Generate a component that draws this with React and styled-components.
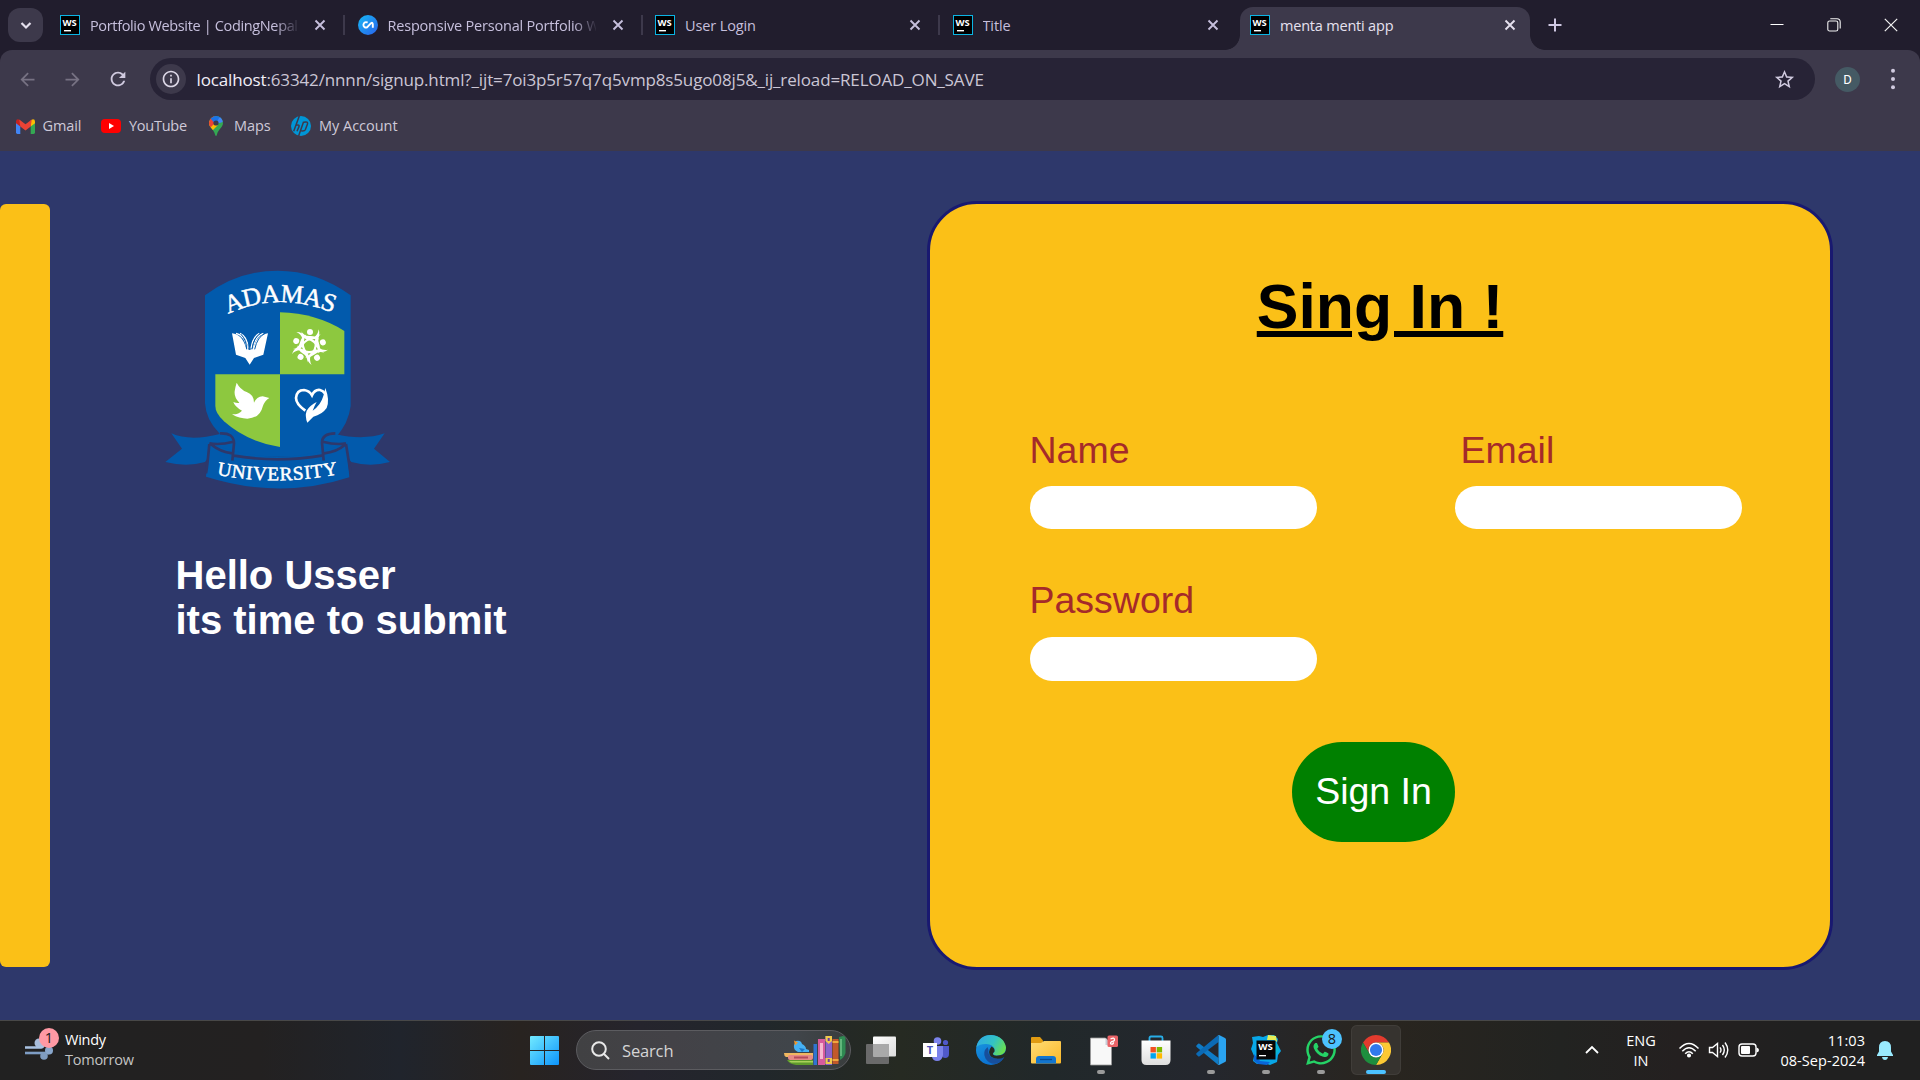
import React from 'react';
import styled, { createGlobalStyle } from 'styled-components';
import { MdArrowBack, MdArrowForward, MdRefresh, MdStarBorder, MdInfoOutline } from 'react-icons/md';
import { FaWhatsapp } from 'react-icons/fa';

const ui = `"Open Sans", "Noto Sans", sans-serif`;
const arial = `"Liberation Sans", Arial, sans-serif`;

const GlobalStyle = createGlobalStyle`
  *, *::before, *::after { box-sizing: border-box; }
  html, body { margin: 0; padding: 0; }
  body { width: 1920px; height: 1080px; overflow: hidden; background: #2e386b; font-family: ${ui}; }
  svg { display: block; flex: none; }
`;

const Screen = styled.div`
  width: 1920px;
  height: 1080px;
  display: flex;
  flex-direction: column;
  overflow: hidden;
`;

/* ---------- Browser chrome ---------- */

const TabStrip = styled.header`
  display: flex;
  height: 50px;
  flex: none;
  background: #211d2d;
`;

const TabSearch = styled.button`
  width: 35px;
  height: 34px;
  margin: 8px 7px 0 8px;
  padding: 0;
  border: 0;
  border-radius: 12px;
  background: #3d394b;
  display: grid;
  place-items: center;
`;

const Tab = styled.div`
  position: relative;
  display: flex;
  align-items: center;
  width: ${(p) => (p.$active ? 290 : 297.5)}px;
  height: ${(p) => (p.$active ? 43 : 50)}px;
  margin-top: ${(p) => (p.$active ? 7 : 0)}px;
  padding: ${(p) => (p.$active ? '0 0 7px 10px' : '0 0 0 10px')};
  border-radius: 13px 13px 0 0;
  background: ${(p) => (p.$active ? '#3d394b' : 'transparent')};
  color: ${(p) => (p.$active ? '#e6e1ef' : '#c6bfdc')};
  &::before,
  &::after {
    content: '';
    display: ${(p) => (p.$active ? 'block' : 'none')};
    position: absolute;
    bottom: 0;
    width: 15px;
    height: 15px;
  }
  &::before {
    left: -15px;
    background: radial-gradient(circle at 0 0, transparent 14.5px, #3d394b 15.2px);
  }
  &::after {
    right: -15px;
    background: radial-gradient(circle at 100% 0, transparent 14.5px, #3d394b 15.2px);
  }
`;

const TabTitle = styled.span`
  width: 208px;
  margin: 1px 14px 0 10px;
  overflow: hidden;
  white-space: nowrap;
  font-size: 14.5px;
  line-height: 22px;
  letter-spacing: ${(p) => p.$spacing || -0.12}px;
  mask-image: ${(p) => (p.$fade ? 'linear-gradient(90deg, #000 185px, transparent 210px)' : 'none')};
`;

const TabDivider = styled.i`
  width: 2px;
  height: 20px;
  margin-left: 15px;
  background: #3d394b;
  visibility: ${(p) => (p.$hidden ? 'hidden' : 'visible')};
`;

const NewTab = styled.div`
  width: 50px;
  height: 50px;
  display: grid;
  place-items: center;
`;

const WindowControls = styled.div`
  display: flex;
  margin: 0 1px 0 auto;
  & > div {
    width: 57px;
    height: 49px;
    display: grid;
    place-items: center;
  }
`;

const ToolbarArea = styled.div`
  height: 101px;
  flex: none;
  background: linear-gradient(#211d2d, #211d2d) 0 0 / 100% 14px no-repeat;
`;

const ToolbarInner = styled.div`
  height: 101px;
  background: #3d394b;
  border-radius: 12px 12px 0 0;
`;

const Toolbar = styled.div`
  display: flex;
  align-items: center;
  height: 58px;
`;

const NavButton = styled.div`
  width: 45px;
  height: 45px;
  display: grid;
  place-items: center;
  color: ${(p) => (p.$muted ? '#777283' : '#d0cadf')};
`;

const NavGroup = styled.div`
  display: flex;
  padding-left: 5px;
  width: 150px;
`;

const Omnibox = styled.div`
  display: flex;
  align-items: center;
  width: 1665px;
  height: 42px;
  padding: 0 19px 0 6px;
  border-radius: 21px;
  background: #272336;
`;

const SiteInfo = styled.div`
  width: 30px;
  height: 30px;
  margin-right: 10.5px;
  border-radius: 50%;
  background: #3d394b;
  color: #dcd7e6;
  display: grid;
  place-items: center;
`;

const Url = styled.div`
  flex: 1;
  margin-top: 1px;
  font-size: 17px;
  line-height: 26px;
  letter-spacing: -0.14px;
  white-space: nowrap;
  color: #cbc6d5;
  b {
    font-weight: 400;
    color: #f2eff8;
  }
`;

const Avatar = styled.div`
  width: 25px;
  height: 25px;
  margin: 0 31px 0 20px;
  border-radius: 50%;
  background: #455a64;
  color: #fff;
  font: 13px/25px Roboto, sans-serif;
  text-align: center;
`;

const Bookmarks = styled.nav`
  display: flex;
  height: 36px;
  align-items: center;
  padding-left: 15.5px;
`;

const Bookmark = styled.div`
  display: flex;
  align-items: center;
  width: ${(p) => p.$w}px;
  font-size: 14.5px;
  line-height: 20px;
  letter-spacing: ${(p) => p.$ls || -0.1}px;
  color: #cec9d8;
  white-space: nowrap;
  svg { margin-right: ${(p) => p.$gap || 8}px; }
`;

/* ---------- Page ---------- */

const Page = styled.main`
  display: flex;
  align-items: flex-start;
  height: 869px;
  flex: none;
  background: #2e386b;
  font-family: ${arial};
`;

const Strip = styled.div`
  width: 50px;
  height: 763px;
  margin-top: 53px;
  border-radius: 6px;
  background: #fbc017;
`;

const Intro = styled.section`
  width: 877px;
  padding: 109px 0 0 100px;
`;

const Greeting = styled.h2`
  margin: 53px 0 0 25.5px;
  font-size: 40px;
  line-height: 45px;
  font-weight: 700;
  color: #fff;
`;

const Card = styled.form`
  width: 906px;
  height: 769px;
  margin-top: 50px;
  padding-top: 66px;
  border: 3px solid #191970;
  border-radius: 50px;
  background: #fbc017;
`;

const CardTitle = styled.h1`
  margin: 0 0 86px;
  font-size: 62.5px;
  line-height: 72px;
  font-weight: 700;
  text-align: center;
  text-decoration: underline;
  text-decoration-thickness: 6px;
  color: #000;
`;

const Fields = styled.div`
  display: grid;
  grid-template-columns: 287px 287px;
  column-gap: 138px;
  row-gap: 49px;
  margin-left: 100px;
`;

const Field = styled.label`
  display: flex;
  flex-direction: column;
  gap: ${(p) => p.$gap || 14}px;
  color: brown;
  font-size: 37.5px;
  line-height: 44px;
`;

const FieldName = styled.span`
  padding-left: ${(p) => p.$indent || 0}px;
  margin-left: -0.5px;
`;

const Input = styled.input`
  width: 287px;
  height: ${(p) => p.$h || 43}px;
  padding: 0 20px;
  border: 0;
  border-radius: 25px;
  background: #fff;
  font-size: 16px;
`;

const Submit = styled.button`
  display: block;
  width: 163px;
  height: 100px;
  margin: 61px 0 0 362px;
  padding: 0 0 2px;
  border: 0;
  border-radius: 50px;
  background: green;
  color: #fff;
  font: 37.5px ${arial};
  white-space: nowrap;
`;

/* ---------- Taskbar ---------- */

const Taskbar = styled.footer`
  display: flex;
  height: 60px;
  flex: none;
  border-top: 1px solid #484848;
  background: linear-gradient(90deg, #212121 0, #232121 260px, #20242c 400px, #282320 520px, #25242d 640px,
    #21272b 760px, #262a22 900px, #21282a 1050px, #24272e 1200px, #29251f 1380px, #222321 1560px, #242020 1680px, #202020 1800px);
  color: #fff;
`;

const Widgets = styled.div`
  display: flex;
  width: 518px;
  padding: 7px 0 0 24px;
`;

const TwoLines = styled.div`
  width: ${(p) => p.$w}px;
  margin-top: 1.5px;
  text-align: ${(p) => p.$align || 'left'};
  font-size: 14.5px;
  line-height: 20px;
  letter-spacing: ${(p) => p.$ls || 0}px;
  white-space: nowrap;
  span { display: block; }
  span:last-child { color: ${(p) => p.$second || '#fff'}; }
`;

const WeatherIcon = styled.div`
  position: relative;
  width: 41px;
  height: 44px;
`;

const Badge = styled.span`
  position: absolute;
  left: ${(p) => p.$x}px;
  top: ${(p) => p.$y}px;
  width: 20px;
  height: 20px;
  border-radius: 50%;
  background: ${(p) => p.$bg};
  color: #1a1a1a;
  font: 14.5px/20px ${ui};
  text-align: center;
`;

const StartButton = styled.div`
  width: 58px;
  padding: 15px 0 0 12px;
`;

const SearchBox = styled.div`
  display: flex;
  align-items: center;
  width: 275px;
  height: 40px;
  margin-top: 9px;
  padding: 0 4px 0 14px;
  border: 1px solid #5c5c60;
  border-radius: 20px;
  background: linear-gradient(90deg, #414143, #434247 35%, #40454a 80%, #393d3d);
  color: #d5d5d5;
  font-size: 16.5px;
  span { flex: 1; margin-left: 12px; letter-spacing: -0.15px; }
`;

const Apps = styled.div`
  display: flex;
  padding: 4px 0 0 5px;
  gap: 5px;
`;

const TaskbarApp = styled.div`
  position: relative;
  width: 50px;
  height: 50px;
  display: grid;
  place-items: center;
  border-radius: 6px;
  background: ${(p) => (p.$active ? '#36332f' : 'transparent')};
  box-shadow: ${(p) => (p.$active ? 'inset 0 0 0 1px #403d39' : 'none')};
  &::after {
    content: '';
    display: ${(p) => (p.$running ? 'block' : 'none')};
    position: absolute;
    bottom: 1px;
    left: ${(p) => (p.$active ? 15 : 21)}px;
    width: ${(p) => (p.$active ? 20 : 8)}px;
    height: 4px;
    border-radius: 2px;
    background: ${(p) => (p.$active ? '#4cc2ff' : '#9a9a9a')};
  }
`;

const Tray = styled.div`
  display: flex;
  align-items: flex-start;
  gap: 12px;
  margin-left: auto;
  padding: 8px 27px 0 0;
  & > svg { margin-top: 8px; }
`;

const TrayGroup = styled.div`
  display: flex;
  gap: 8px;
  width: 91px;
  padding-top: 11px;
  margin-left: -5px;
  margin-right: -12px;
`;

/* ---------- Icons ---------- */

const WsIcon = () => (
  <svg width="20" height="20" viewBox="0 0 20 20">
    <rect x=".5" y=".5" width="19" height="19" fill="#000" stroke="#0bb4e3" />
    <text x="2.4" y="10.6" fontFamily="Open Sans, sans-serif" fontWeight="700" fontSize="9.4" fill="#fff">WS</text>
    <rect x="4" y="15" width="7" height="1.4" fill="#fff" />
  </svg>
);

const CnIcon = () => (
  <svg width="20" height="20" viewBox="0 0 20 20">
    <defs>
      <linearGradient id="cn" x1="0" y1="0" x2="1" y2="1">
        <stop offset="0" stopColor="#16b9f5" />
        <stop offset="1" stopColor="#2a62ec" />
      </linearGradient>
    </defs>
    <circle cx="10" cy="10" r="10" fill="url(#cn)" />
    <path d="M9.600 7.600A2.700 2.700 0 1 0 9 12.400L13 8.200Q14.800 7 14.800 9.600V12.800" fill="none" stroke="#fff" strokeWidth="1.900" />
  </svg>
);

const CloseX = () => (
  <svg width="16" height="16" viewBox="0 0 16 16" stroke="currentColor" strokeWidth="1.9">
    <path d="M3.5 3.5l9 9M12.5 3.5l-9 9" />
  </svg>
);

const GmailIcon = () => (
  <svg width="19" height="15" viewBox="0 0 19 15">
    <path d="M0 2.5V13.6Q0 15 1.4 15H4.3V6z" fill="#4285f4" />
    <path d="M19 2.5V13.6Q19 15 17.6 15H14.7V6z" fill="#34a853" />
    <path d="M14.7 1.2L17 .2Q19 .2 19 2.4V4.2L14.7 7.5z" fill="#fbbc04" />
    <path d="M0 4.2V2.4Q0 .2 2 .2L4.3 1.2V7.5z" fill="#c5221f" />
    <path d="M3.2.4L9.5 5.2 15.8.4 14.7 7.5 9.5 11.4 4.3 7.5z" fill="#ea4335" />
  </svg>
);

const YoutubeIcon = () => (
  <svg width="20" height="14" viewBox="0 0 20 14">
    <rect width="20" height="14" rx="4" fill="#f00" />
    <path d="M8 4l5 3-5 3z" fill="#fff" />
  </svg>
);

const MapsIcon = () => (
  <svg width="14" height="20" viewBox="0 0 14 20">
    <defs>
      <clipPath id="pin"><path d="M7 0a7 7 0 0 1 7 7c0 4.500-5 6.500-6 11.500Q7.500 20 7 20T6 18.500C5 13.500 0 11.500 0 7a7 7 0 0 1 7-7z" /></clipPath>
    </defs>
    <g clipPath="url(#pin)">
      <rect width="14" height="20" fill="#34a853" />
      <path d="M0 14V5l4-1 5 5-6 6z" fill="#fbbc04" />
      <path d="M0 0h5l3 5-6 6H0z" fill="#ea4335" />
      <path d="M1.500 2.500L6 7.500 13 1 7-1z" fill="#1a73e8" />
      <path d="M14 0v6L7 8l3-6z" fill="#4285f4" />
    </g>
    <circle cx="7" cy="7" r="2.600" fill="#3d394b" />
  </svg>
);

const HpIcon = () => (
  <svg width="20" height="20" viewBox="0 0 20 20">
    <circle cx="10" cy="10" r="10" fill="#0096d6" />
    <path d="M8.300 0L2.700 15.300M4.900 9.200q4-1 3 1.700L6 15.300M12.600 5.700L7.600 20M12.600 6.200q5-1.200 3.700 2.200l-2 5.400q-.7 1.500-4.200 1" fill="none" stroke="#3d394b" strokeWidth="1.500" />
  </svg>
);

const Crest = () => (
  <svg width="250" height="240" viewBox="0 0 750 720" fontFamily="Liberation Serif, serif">
    <defs>
      <path id="arcTop" d="M234 162 Q392 90 562 164" />
      <path id="arcBottom" d="M200 644 Q385 680 578 640" />
    </defs>
    <path d="M165 106Q265 32 383 32T602 106V438Q596 490 556 534L522 590H245L208 520Q168 480 165 430z" fill="#025aac" />
    <path d="M390 157Q500 160 583 213V343H390z" fill="#8dc83f" />
    <path d="M196 343H390V561Q290 545 222 484 196 460 196 438z" fill="#8dc83f" />
    <path d="M64 520Q120 545 210 522 250 518 254 550L245 604 180 584 165 606Q110 622 46 606L96 566z" fill="#025aac" />
    <path d="M704 520Q640 542 556 522 518 520 516 550L522 604 586 584 604 606Q660 622 720 606L672 566z" fill="#025aac" />
    <path d="M178 550Q390 630 590 550L598 652Q390 720 168 650z" fill="#025aac" />
    <path d="M210 520Q252 518 252 550L247 602M178 552Q172 620 168 640M178 550Q210 556 250 545M182 552Q210 576 247 580M247 586Q380 610 520 586M556 520Q516 520 516 548L521 602M588 552L602 640M588 550Q560 556 518 545M584 555Q560 576 522 580" fill="none" stroke="#2e386b" strokeWidth="8" />
    <text fontSize="77" fill="#fff" stroke="#fff" strokeWidth="1.500"><textPath href="#arcTop" textLength="324" lengthAdjust="spacing">ADAMAS</textPath></text>
    <text fontSize="58" fill="#fff" stroke="#fff" strokeWidth="1.500"><textPath href="#arcBottom" textLength="366" lengthAdjust="spacing">UNIVERSITY</textPath></text>
    <g fill="#fff">
      <path d="M246 220Q276 222 288 264L299 270 310 264Q322 222 354 220L340 284 312 294 299 314 286 294 258 284z" />
      <g fill="none" stroke="#fff" strokeWidth="4">
        <path d="M258 220Q286 226 292 268M270 220Q292 230 296 266M340 220Q316 226 308 268M328 220Q308 230 303 266" />
      </g>
      <g fill="none" stroke="#025aac" strokeWidth="3">
        <path d="M272 222Q290 240 290 268M284 220Q298 240 297 268M332 220Q312 230 306 268M346 220Q322 230 314 268" />
      </g>
      <path d="M260 368Q270 388 290 396 312 404 312 428 320 410 338 409L358 414Q344 422 338 440 330 474 292 476 268 476 246 463 266 464 276 452 254 440 250 426 262 430 268 428 252 412 254 394 256 380 260 368z" />
      <g transform="translate(478 258)">
        {[0, 72, 144, 216, 288].map((a) => (
          <g key={a} transform={`rotate(${a})`}>
            <circle cx="2" cy="-42" r="9" />
            <path d="M-24-44Q-16-28 4-30 20-30 30-20 16-22 8-20 28-12 24 6 14-14-4-18-20-22-24-44z" />
            <path d="M14-26Q26-34 28-50 34-32 22-20z" />
          </g>
        ))}
      </g>
      <path d="M466 452Q438 432 438 414 440 390 462 390 478 392 486 406 494 388 510 390 520 392 524 400" fill="none" stroke="#fff" strokeWidth="8" />
      <path d="M526 384Q540 420 530 444 516 464 490 470L472 488Q464 468 470 452 480 436 500 426 492 440 488 452 512 436 520 408z" />
    </g>
  </svg>
);

const WeatherArt = () => (
  <svg width="30" height="32" viewBox="0 0 30 32">
    <circle cx="15" cy="15" r="4.500" fill="#a8bddb" />
    <path d="M1 19.500H17Q20 19 20 15" fill="none" stroke="#a9c2e2" strokeWidth="2.600" />
    <path d="M1 25H25" stroke="#7e9dc4" strokeWidth="2.600" />
    <circle cx="25" cy="22.500" r="4" fill="#88a6cb" />
    <circle cx="20" cy="28" r="3.800" fill="#7f9cc0" />
  </svg>
);

const StartIcon = () => (
  <svg width="29" height="29" viewBox="0 0 29 29">
    <defs>
      <linearGradient id="win" gradientUnits="userSpaceOnUse" x1="0" y1="0" x2="29" y2="29">
        <stop offset="0" stopColor="#72eaff" />
        <stop offset="1" stopColor="#0d94fb" />
      </linearGradient>
    </defs>
    <path d="M0 1q0-1 1-1h13v14H0zM15 0h13q1 0 1 1v13H15zM0 15h14v14H1q-1 0-1-1zM15 15h14v13q0 1-1 1H15z" fill="url(#win)" />
  </svg>
);

const BooksArt = () => (
  <svg width="62" height="29" viewBox="0 0 62 29">
    <path d="M3 24h26v5H12Q5 28 3 24z" fill="#5f9a2c" />
    <path d="M5 25h24v1.500H7z" fill="#a9d15a" />
    <path d="M0 17h29v4H2Q0 20 0 17z" fill="#f0b860" />
    <rect x="4" y="19" width="25" height="5" rx="2" fill="#e58a86" />
    <path d="M10 21.500h14" stroke="#b44b5b" strokeWidth="2" />
    <path d="M12 5q5-1 6 3 4 2 4 5l3 1v2H14q-5-2-4-7z" fill="#46b1f4" />
    <path d="M10 4.500l4 2-3 3z" fill="#f0992f" />
    <path d="M15 12l6 1-3 3z" fill="#1b76c9" />
    <rect x="29.500" y="8" width="3.500" height="21" fill="#2f74d0" />
    <rect x="34" y="3" width="7" height="26" fill="#d75b9d" />
    <rect x="36" y="7" width="3" height="16" fill="#f6b7d0" />
    <rect x="41.500" y="0" width="6.500" height="29" fill="#8b62c9" />
    <path d="M41.500 0H48v5l-3.250 3-3.250-3zM41.500 22H48v6h-6.500z" fill="#f1c94d" />
    <path d="M44.700 2v3M44.700 23v3" stroke="#6b3fa0" strokeWidth="2" />
    <rect x="48.500" y="3" width="6" height="25" fill="#c2592b" />
    <path d="M48.500 6h6M48.500 24h6" stroke="#f0a83f" strokeWidth="2" />
    <path d="M55 1l4-1q2 0 2.500 2V17Q60 22 56 24z" fill="#2f8a52" />
    <path d="M57 3v17" stroke="#73c58a" strokeWidth="1.500" />
  </svg>
);

const TaskViewIcon = () => (
  <svg width="30" height="30" viewBox="0 0 30 30">
    <defs>
      <linearGradient id="tv" x1="0" y1="0" x2="1" y2="1"><stop offset="0" stopColor="#fff" /><stop offset="1" stopColor="#dcdcdc" /></linearGradient>
    </defs>
    <rect x="0" y="9" width="23" height="20" rx="1" fill="#6a6a6a" />
    <rect x="7" y="1.500" width="23" height="20" rx="1" fill="url(#tv)" />
    <path d="M7 9h16v12.500H7z" fill="#a9a9a9" />
  </svg>
);

const TeamsIcon = () => (
  <svg width="30" height="30" viewBox="1 0.5 30 30">
    <circle cx="17.500" cy="6.500" r="3.800" fill="#7b83eb" />
    <circle cx="25.500" cy="8" r="2.600" fill="#5059c9" />
    <path d="M21 11.500h8v8q0 4-4 4-4-1-4-4z" fill="#5059c9" />
    <path d="M12 11.500h11v9q-1 6-6 6-4 0-5-4z" fill="#7b83eb" />
    <rect x="3" y="8.500" width="14" height="14" fill="#fff" />
    <text x="10" y="19.500" textAnchor="middle" fontFamily="Open Sans, sans-serif" fontWeight="700" fontSize="11" fill="#4b53bc">T</text>
  </svg>
);

const EdgeIcon = () => (
  <svg width="30" height="30" viewBox="0 0 30 30">
    <defs>
      <linearGradient id="e1" x1="0" y1=".2" x2="1" y2=".6"><stop offset="0" stopColor="#2fa9e5" /><stop offset=".55" stopColor="#33c3c4" /><stop offset="1" stopColor="#6be04e" /></linearGradient>
      <linearGradient id="e2" x1="0" y1="0" x2=".5" y2="1"><stop offset="0" stopColor="#1b9de2" /><stop offset="1" stopColor="#0a6fd0" /></linearGradient>
    </defs>
    <circle cx="15" cy="15" r="15" fill="url(#e2)" />
    <path d="M.3 12Q3 0 15 0 28 1 30 12.500 30 20 22 20.500 17 20.500 17 18.500 19 17 18.500 14 17 9.500 10.500 9 4 8.700.3 12z" fill="url(#e1)" />
    <path d="M11.500 12Q6 17 9.500 23.500 14 30 21 28.500 26 26 28 22 21 25 16 22.500 11.500 19.500 12.500 15z" fill="#174f9c" />
    <path d="M15.500 11.500Q19 13 18.500 16.500 16.500 18 17 19.500 19 21.500 24 20.300 30 19 30 14V21L28.300 22.300Q21 25.500 15.500 22 10.500 17.500 15.500 11.500z" fill="#262a22" />
  </svg>
);

const FolderIcon = () => (
  <svg width="30" height="30" viewBox="0 0 30 30">
    <defs><linearGradient id="fd" x1="0" y1="0" x2="1" y2="1"><stop offset="0" stopColor="#ffdc75" /><stop offset="1" stopColor="#fbb929" /></linearGradient></defs>
    <path d="M0 3q0-1 1-1h8l3 3.500V9H0z" fill="#e09b12" />
    <path d="M0 8h10l3-2h16q1 0 1 1v20.500q0 1-1 1H1q-1 0-1-1z" fill="url(#fd)" />
    <path d="M5 28.500V24q0-3 3-3h14q3 0 3 3v4.500z" fill="#1376cf" />
    <path d="M9 24.500h12" stroke="#0a4b91" strokeWidth="1.300" />
  </svg>
);

const DocIcon = () => (
  <svg width="34" height="34" viewBox="-2 0 34 34">
    <path d="M4.500 5h15l6 6v21h-21z" fill="#f8f8f8" stroke="#9b9b9b" strokeWidth=".8" />
    <path d="M19.500 5v7h6" fill="#c7cdd8" />
    <rect x="21.500" y="2.500" width="10.500" height="11.500" rx="1.500" fill="#ea6468" />
    <path d="M24.500 6q4-2 4 .7 0 1.600-3 2-2 1.700 0 2.500 2 0 2-2" fill="none" stroke="#fff" strokeWidth="1.300" />
  </svg>
);

const StoreIcon = () => (
  <svg width="30" height="30" viewBox="0 0 30 30">
    <defs><linearGradient id="st" x1="0" y1="0" x2="0" y2="1"><stop offset="0" stopColor="#fff" /><stop offset="1" stopColor="#dedede" /></linearGradient></defs>
    <path d="M8.500 7V3q0-1.500 1.500-1.500h10Q21.500 1.500 21.500 3v4" fill="none" stroke="#28aee8" strokeWidth="1.800" />
    <path d="M.5 5.500h29V25q0 5-5 5h-19q-5 0-5-5z" fill="url(#st)" />
    <path d="M9.500 12h5.400v5.400H9.500z" fill="#f25022" />
    <path d="M15.700 12h5.400v5.400h-5.400z" fill="#7fba00" />
    <path d="M9.500 18.200h5.400v5.400H9.500z" fill="#00a4ef" />
    <path d="M15.700 18.200h5.400v5.400h-5.400z" fill="#ffb900" />
  </svg>
);

const CodeIcon = () => (
  <svg width="30" height="30" viewBox="0 0 30 30">
    <path d="M22 29.700L.6 11.900q-.8-.9 0-1.700l1.500-1.400q.7-.5 1.500 0L22.500 23z" fill="#0f7bc6" />
    <path d="M22 .3L.6 18.100q-.8.900 0 1.700l1.500 1.400q.7.500 1.500 0L22.500 7z" fill="#0b6ab5" />
    <path d="M22 .3q.8-.5 1.600 0L29 2.900q1 .6 1 1.700v20.800q0 1.100-1 1.700l-5.400 2.600q-.8.500-1.600 0 .5-.3.500-1V1.300q0-.7-.5-1z" fill="#2aa3f0" />
  </svg>
);

const WebStormIcon = () => (
  <svg width="30" height="30" viewBox="0 0 30 30">
    <path d="M1 2l7-1 4 1 5-2 6 0 4 4-1 4 4 8-3 4-1 7-7 3-6-2-7 1-4-3 1-5-3-7 2-6z" fill="#08a7e8" />
    <path d="M17 0l8 1 1 6-3-2h-7z" fill="#e7ef57" />
    <path d="M3 19l6 7 10 1-3 3-9-1-4-3z" fill="#0966d8" />
    <path d="M23 6l4 5 1 5-3 4h-2z" fill="#09b6d0" />
    <rect x="5.500" y="5.500" width="19" height="19" fill="#060606" />
    <text x="7.200" y="14.500" fontFamily="Open Sans, sans-serif" fontWeight="700" fontSize="9.600" fill="#fff">WS</text>
    <rect x="8" y="20" width="7" height="1.300" fill="#fff" />
  </svg>
);

const ChromeIcon = () => (
  <svg width="30" height="30" viewBox="0 0 48 48">
    <path d="M24 12h20.781A24 24 0 0 0 3.217 12.003L13.608 30A11.985 11.985 0 0 1 24 12z" fill="#e33b2e" />
    <path d="M34.391 30.003L24.001 48A23.994 23.994 0 0 0 44.780 12H24a11.985 11.985 0 0 1 10.391 18.003z" fill="#fcc934" />
    <path d="M13.609 30.003L3.218 12.006A23.994 23.994 0 0 0 24.003 48l10.390-17.997a11.985 11.985 0 0 1-20.784 0z" fill="#1e8e3e" />
    <circle cx="24" cy="24" r="12" fill="#fff" />
    <circle cx="24" cy="24" r="9.700" fill="#3079ec" />
  </svg>
);

const tabs = [
  { title: 'Portfolio Website | CodingNepal', fade: true, spacing: -0.35 },
  { title: 'Responsive Personal Portfolio Website', fade: true, cn: true, spacing: -0.2 },
  { title: 'User Login' },
  { title: 'Title' },
  { title: 'menta menti app', active: true, spacing: -0.2 },
];

export default function App() {
  return (
    <Screen>
      <GlobalStyle />
      <TabStrip>
        <TabSearch>
          <svg width="14" height="14" viewBox="0 0 14 14" fill="none" stroke="#e5e0ee" strokeWidth="2.200"><path d="M2.500 5L7 9.500 11.500 5" /></svg>
        </TabSearch>
        {tabs.map((t, i) => (
          <Tab key={t.title} $active={t.active}>
            {t.cn ? <CnIcon /> : <WsIcon />}
            <TabTitle $fade={t.fade} $spacing={t.spacing}>{t.title}</TabTitle>
            <CloseX />
            {!t.active && <TabDivider $hidden={i === 3} />}
          </Tab>
        ))}
        <NewTab>
          <svg width="16" height="16" viewBox="0 0 16 16" stroke="#cfc8e2" strokeWidth="2"><path d="M8 1.500v13M1.500 8h13" /></svg>
        </NewTab>
        <WindowControls>
          <div><svg width="14" height="14" viewBox="0 0 14 14" stroke="#fff"><path d="M.5 6.500h13" /></svg></div>
          <div>
            <svg width="14" height="14" viewBox="0 0 14 14" stroke="#f2f2f2" fill="none" strokeWidth="1.100">
              <rect x=".8" y="3" width="10" height="10" rx="1.800" />
              <path d="M3.300.7H10Q13.200.7 13.200 4V10.500" />
            </svg>
          </div>
          <div><svg width="14" height="14" viewBox="0 0 14 14" stroke="#f2f2f2" strokeWidth="1.200"><path d="M.8.8l12.400 12.400M13.200.8L.8 13.200" /></svg></div>
        </WindowControls>
      </TabStrip>
      <ToolbarArea>
        <ToolbarInner>
          <Toolbar>
            <NavGroup>
              <NavButton $muted><MdArrowBack size={21} /></NavButton>
              <NavButton $muted><MdArrowForward size={21} /></NavButton>
              <NavButton><MdRefresh size={22} /></NavButton>
            </NavGroup>
            <Omnibox>
              <SiteInfo><MdInfoOutline size={20} /></SiteInfo>
              <Url><b>localhost</b>:63342/nnnn/signup.html?_ijt=7oi3p5r57q7q5vmp8s5ugo08j5&amp;_ij_reload=RELOAD_ON_SAVE</Url>
              <MdStarBorder size={23} color="#d0cadf" />
            </Omnibox>
            <Avatar>D</Avatar>
            <svg width="4" height="22" viewBox="0 0 4 22" fill="#d0cadf"><circle cx="2" cy="2.800" r="2" /><circle cx="2" cy="11" r="2" /><circle cx="2" cy="19.200" r="2" /></svg>
          </Toolbar>
          <Bookmarks>
            <Bookmark $w={85.5}><GmailIcon />Gmail</Bookmark>
            <Bookmark $w={108} $ls={-0.25}><YoutubeIcon />YouTube</Bookmark>
            <Bookmark $w={82} $gap={11}><MapsIcon />Maps</Bookmark>
            <Bookmark $w={110} $ls={-0.02}><HpIcon />My Account</Bookmark>
          </Bookmarks>
        </ToolbarInner>
      </ToolbarArea>

      <Page>
        <Strip />
        <Intro>
          <Crest />
          <Greeting>Hello Usser<br />its time to submit</Greeting>
        </Intro>
        <Card onSubmit={(e) => e.preventDefault()}>
          <CardTitle>Sing In !</CardTitle>
          <Fields>
            <Field><FieldName>Name</FieldName><Input type="text" /></Field>
            <Field><FieldName $indent={6}>Email</FieldName><Input type="email" /></Field>
            <Field $gap={15}><FieldName>Password</FieldName><Input type="password" $h={44} /></Field>
          </Fields>
          <Submit type="submit">Sign In</Submit>
        </Card>
      </Page>

      <Taskbar>
        <Widgets>
          <WeatherIcon>
            <WeatherArt />
            <Badge $x={15} $y={0} $bg="#ff99a4">1</Badge>
          </WeatherIcon>
          <TwoLines $w={90} $ls={-0.25} $second="#c4c4c4"><span>Windy</span><span>Tomorrow</span></TwoLines>
        </Widgets>
        <StartButton><StartIcon /></StartButton>
        <SearchBox>
          <svg width="19" height="19" viewBox="0 0 19 19" fill="none" stroke="#e8e8e8" strokeWidth="2"><circle cx="8" cy="8" r="6.800" /><path d="M13 13l5 5" /></svg>
          <span>Search</span>
          <BooksArt />
        </SearchBox>
        <Apps>
          <TaskbarApp><TaskViewIcon /></TaskbarApp>
          <TaskbarApp><TeamsIcon /></TaskbarApp>
          <TaskbarApp><EdgeIcon /></TaskbarApp>
          <TaskbarApp><FolderIcon /></TaskbarApp>
          <TaskbarApp $running><DocIcon /></TaskbarApp>
          <TaskbarApp><StoreIcon /></TaskbarApp>
          <TaskbarApp $running><CodeIcon /></TaskbarApp>
          <TaskbarApp $running><WebStormIcon /></TaskbarApp>
          <TaskbarApp $running><FaWhatsapp size={34} color="#25d366" /><Badge $x={26} $y={4} $bg="#4cc2ff">8</Badge></TaskbarApp>
          <TaskbarApp $running $active><ChromeIcon /></TaskbarApp>
        </Apps>
        <Tray>
          <svg width="14" height="26" viewBox="0 0 14 26" fill="none" stroke="#fff" strokeWidth="1.800"><path d="M1 16l6-6 6 6" /></svg>
          <TwoLines $w={60} $align="center"><span>ENG</span><span>IN</span></TwoLines>
          <TrayGroup>
            <svg width="22" height="20" viewBox="0 0 22 20" fill="none" stroke="#fff" strokeWidth="1.500">
              <path d="M1.500 8.500Q11-1.500 20.500 8.500" /><path d="M4.300 11.300Q11 4 17.700 11.300" /><path d="M7.200 13.800Q11 9.800 14.800 13.800" /><circle cx="11" cy="15.500" r="1.300" fill="#fff" />
            </svg>
            <svg width="22" height="20" viewBox="0 0 22 20" fill="none" stroke="#fff" strokeWidth="1.400">
              <path d="M1.500 7.500h3L9.500 3.500v13l-5-4h-3z" /><path d="M12 7.300q2 2.700 0 5.400M14.500 5q3.600 5 0 10M17 2.500q5.500 7.500 0 15" />
            </svg>
            <svg width="22" height="20" viewBox="0 0 22 20">
              <rect x="1" y="4" width="17" height="12" rx="3" fill="none" stroke="#fff" strokeWidth="1.400" /><rect x="3" y="6" width="9" height="8" rx="1" fill="#fff" /><path d="M18.500 7.500q2.500.5 2.500 2.500t-2.500 2.500z" fill="#fff" />
            </svg>
          </TrayGroup>
          <TwoLines $w={96} $align="right" $ls={0.05}><span>11:03</span><span>08-Sep-2024</span></TwoLines>
          <svg width="16" height="28" viewBox="0 0 16 28" fill="#99ebff">
            <path d="M8 4q6 .2 6 6.500v4l2 3.500v1H0v-1l2-3.500v-4Q2 4.200 8 4zM5 20h6q-.5 3-3 3t-3-3z" />
          </svg>
        </Tray>
      </Taskbar>
    </Screen>
  );
}
